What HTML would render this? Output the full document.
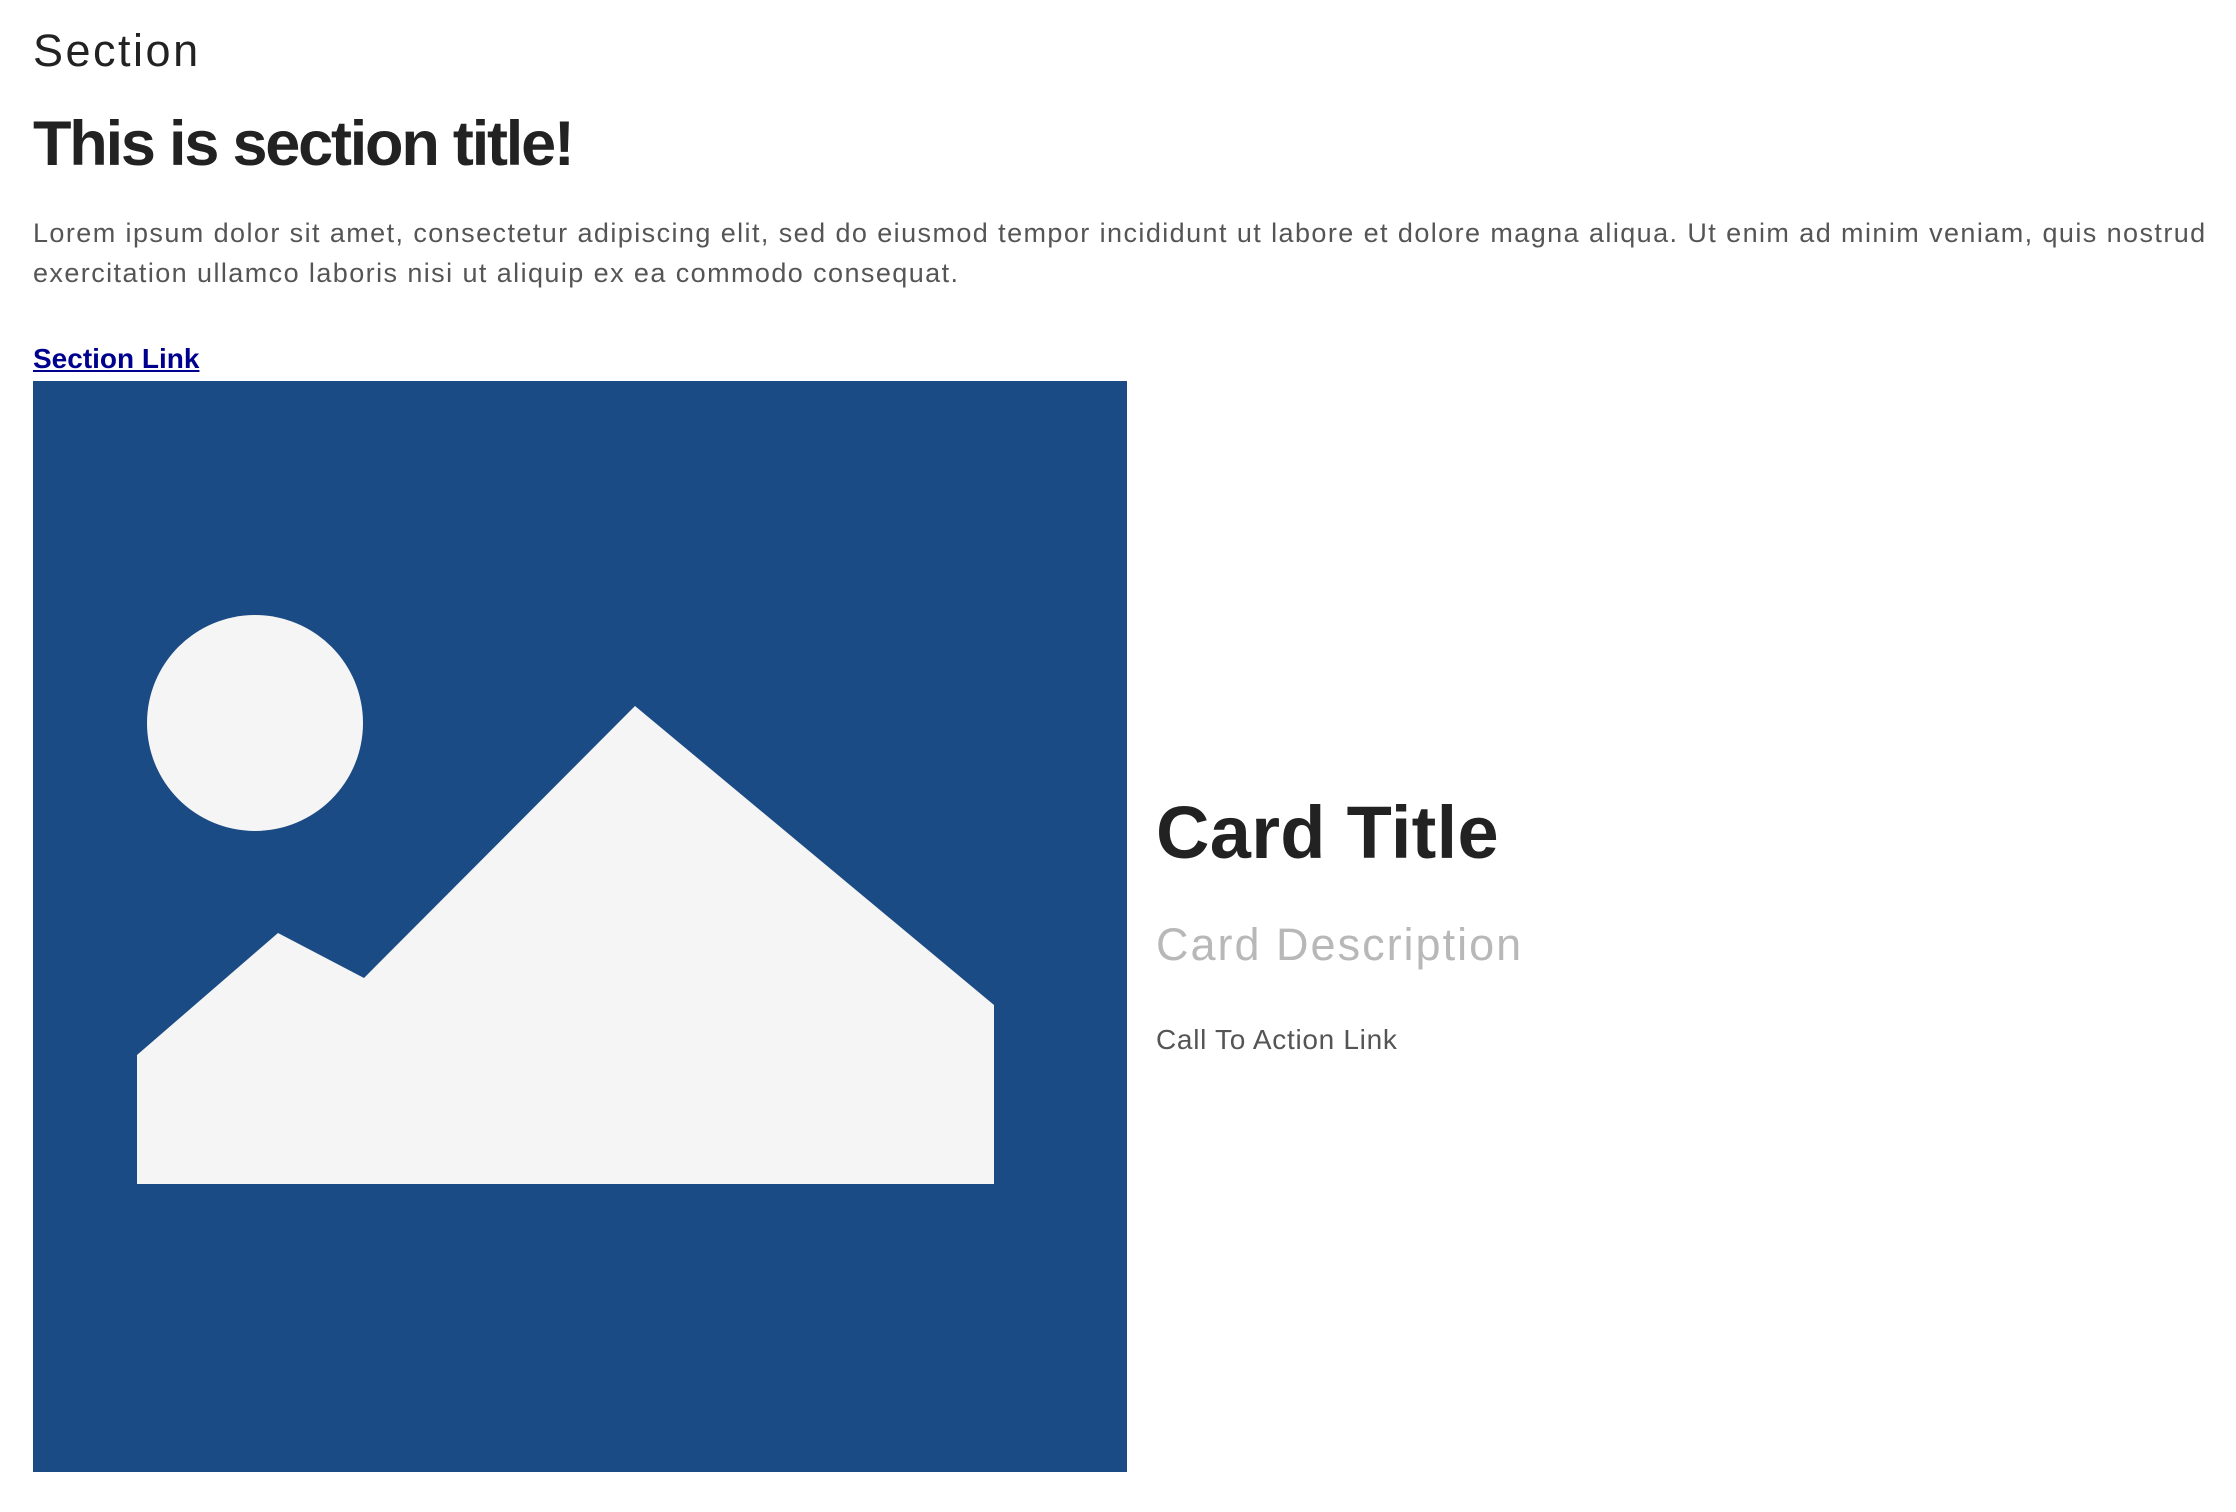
<!DOCTYPE html>
<html><head><meta charset="utf-8"><style>
html,body{margin:0;padding:0;background:#fff;width:2236px;height:1512px;overflow:hidden}
body{font-family:"Liberation Sans",sans-serif;position:relative}
.t{position:absolute;line-height:1;white-space:nowrap}
</style></head><body>
<div class="t" style="left:33px;top:28px;font-size:45px;letter-spacing:2.5px;color:#222">Section</div>
<div class="t" style="left:33px;top:113px;font-size:63px;letter-spacing:-2.2px;font-weight:bold;color:#222">This is section title!</div>
<div class="t" style="left:33px;top:213px;font-size:27px;letter-spacing:1.42px;line-height:40px;color:#555">Lorem ipsum dolor sit amet, consectetur adipiscing elit, sed do eiusmod tempor incididunt ut labore et dolore magna aliqua. Ut enim ad minim veniam, quis nostrud<br>exercitation ullamco laboris nisi ut aliquip ex ea commodo consequat.</div>
<div class="t" style="left:33px;top:345px;font-size:28px;font-weight:bold;color:#00008f;text-decoration:underline">Section Link</div>
<svg style="position:absolute;left:33px;top:381px" width="1094" height="1091" viewBox="33 381 1094 1091">
<rect x="33" y="381" width="1094" height="1091" fill="#1b4b84"/>
<circle cx="255" cy="723" r="108" fill="#f5f5f5"/>
<polygon points="137,1055 278,933 364,978 635,706 994,1005 994,1184 137,1184" fill="#f5f5f5"/>
</svg>
<div class="t" style="left:1156px;top:796px;font-size:74px;letter-spacing:0.3px;font-weight:bold;color:#222">Card Title</div>
<div class="t" style="left:1156px;top:922px;font-size:45px;letter-spacing:2px;color:#b8b8b8">Card Description</div>
<div class="t" style="left:1156px;top:1026px;font-size:28px;letter-spacing:0.7px;color:#555">Call To Action Link</div>
</body></html>
